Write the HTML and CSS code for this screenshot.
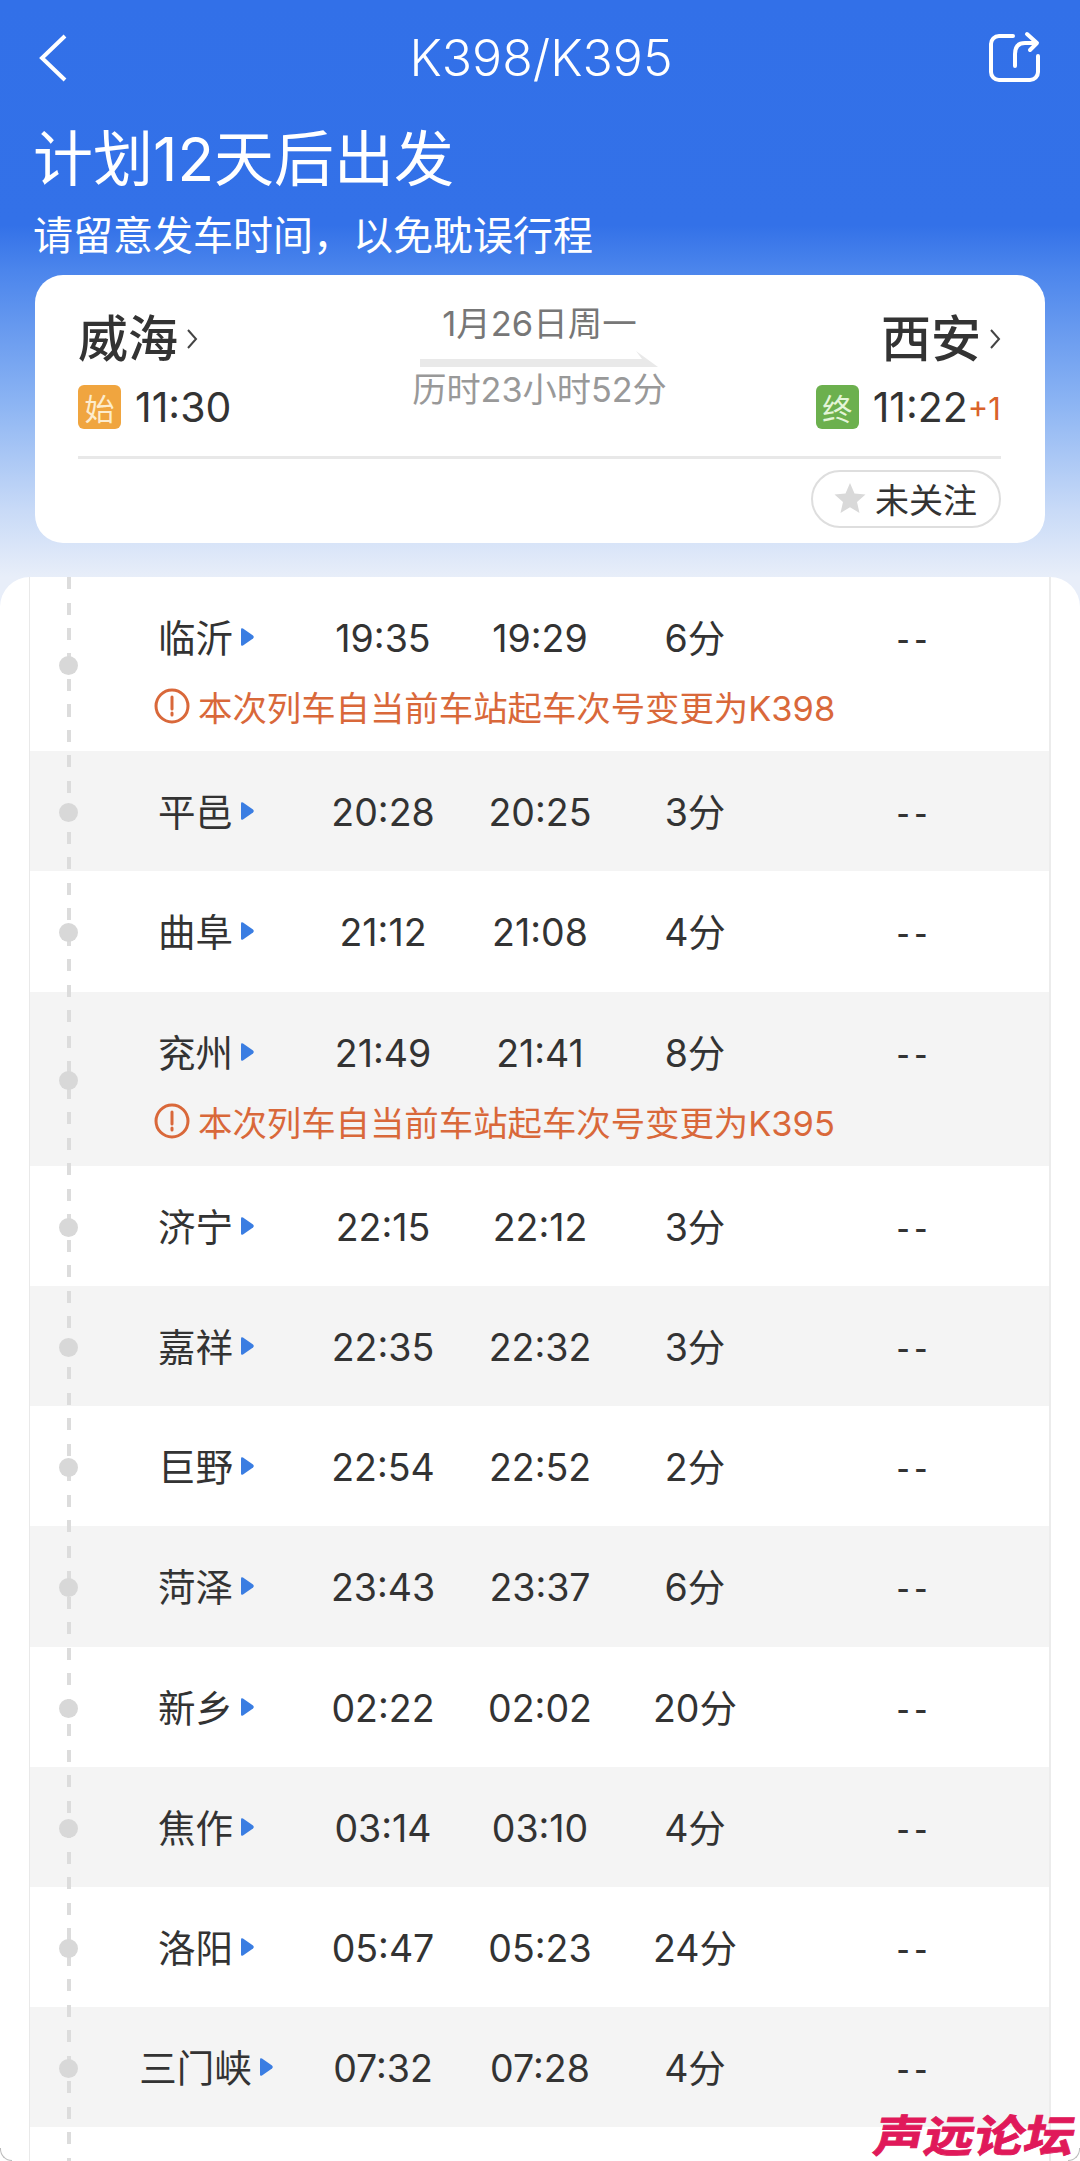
FILE: index.html
```html
<!DOCTYPE html>
<html lang="zh-CN">
<head>
    <meta charset="UTF-8">
    <meta name="viewport" content="width=device-width, initial-scale=1.0">
    <title>K398/K395</title>
    <link rel="stylesheet" href="styles.css">
</head>
<body>
<div class="page">

    <!-- Top bar -->
    <div class="navbar">
        <svg class="back-icon" viewBox="0 0 30 48"><path d="M27 2 L4 24 L27 46"/></svg>
        <div class="nav-title">K398/K395</div>
        <svg class="share-icon" viewBox="0 0 60 60">
            <path d="M29 8H15a8 8 0 0 0-8 8V44a8 8 0 0 0 8 8H46a8 8 0 0 0 8-8V28"/>
            <path d="M31 38V26Q31 15 41 15H52"/>
            <path d="M43 6L53 15L46 22"/>
        </svg>
    </div>

    <div class="headline">计划12天后出发</div>
    <div class="subline">请留意发车时间，以免耽误行程</div>

    <!-- Route card -->
    <div class="route-card">
        <div class="route-top">
            <div class="route-end">
                <div class="city">威海<svg class="chevron" viewBox="0 0 12 24"><path d="M2 3L10 12L2 21"/></svg></div>
                <div class="time-line">
                    <span class="tag tag-start">始</span>
                    <span class="end-time">11:30</span>
                </div>
            </div>
            <div class="route-mid">
                <div class="route-date">1月26日周一</div>
                <svg class="route-arrow" viewBox="0 0 238 16"><path d="M0 8H222L216 0L238 16H0Z"/></svg>
                <div class="route-length">历时23小时52分</div>
            </div>
            <div class="route-end route-end-right">
                <div class="city">西安<svg class="chevron" viewBox="0 0 12 24"><path d="M2 3L10 12L2 21"/></svg></div>
                <div class="time-line">
                    <span class="tag tag-end">终</span>
                    <span class="end-time">11:22</span><span class="plus-day">+1</span>
                </div>
            </div>
        </div>
        <div class="route-foot">
            <div class="follow-btn">
                <svg class="star" viewBox="0 0 32 32"><path d="M16 1L20.5 11.5L31.500 12.500L23 20L25.500 31L16 25.200L6.500 31L9 20L.5 12.500L11.500 11.500Z"/></svg>
                未关注
            </div>
        </div>
    </div>

    <!-- Stop list -->
    <div class="sheet">
        <div class="stops">
            <div class="track"></div>

            <div class="stop">
                <span class="dot"></span>
                <div class="stop-main">
                    <div class="stop-name">临沂<svg class="mark" viewBox="0 0 13 20"><path d="M2 1.500L12 8.500Q13.500 10 12 11.500L2 18.500Q0 19.500 0 17.500V2.500Q0 .5 2 1.500Z"/></svg></div>
                    <div>19:35</div><div>19:29</div><div>6分</div><div class="dash">--</div>
                </div>
                <div class="stop-note">
                    <svg class="warn" viewBox="0 0 36 36"><circle cx="18" cy="18" r="16"/><path d="M18 9V21M18 25V27"/></svg>
                    本次列车自当前车站起车次号变更为K398
                </div>
            </div>

            <div class="stop stop-alt">
                <span class="dot"></span>
                <div class="stop-main">
                    <div class="stop-name">平邑<svg class="mark" viewBox="0 0 13 20"><path d="M2 1.500L12 8.500Q13.500 10 12 11.500L2 18.500Q0 19.500 0 17.500V2.500Q0 .5 2 1.500Z"/></svg></div>
                    <div>20:28</div><div>20:25</div><div>3分</div><div class="dash">--</div>
                </div>
            </div>

            <div class="stop">
                <span class="dot"></span>
                <div class="stop-main">
                    <div class="stop-name">曲阜<svg class="mark" viewBox="0 0 13 20"><path d="M2 1.500L12 8.500Q13.500 10 12 11.500L2 18.500Q0 19.500 0 17.500V2.500Q0 .5 2 1.500Z"/></svg></div>
                    <div>21:12</div><div>21:08</div><div>4分</div><div class="dash">--</div>
                </div>
            </div>

            <div class="stop stop-alt">
                <span class="dot"></span>
                <div class="stop-main">
                    <div class="stop-name">兖州<svg class="mark" viewBox="0 0 13 20"><path d="M2 1.500L12 8.500Q13.500 10 12 11.500L2 18.500Q0 19.500 0 17.500V2.500Q0 .5 2 1.500Z"/></svg></div>
                    <div>21:49</div><div>21:41</div><div>8分</div><div class="dash">--</div>
                </div>
                <div class="stop-note">
                    <svg class="warn" viewBox="0 0 36 36"><circle cx="18" cy="18" r="16"/><path d="M18 9V21M18 25V27"/></svg>
                    本次列车自当前车站起车次号变更为K395
                </div>
            </div>

            <div class="stop">
                <span class="dot"></span>
                <div class="stop-main">
                    <div class="stop-name">济宁<svg class="mark" viewBox="0 0 13 20"><path d="M2 1.500L12 8.500Q13.500 10 12 11.500L2 18.500Q0 19.500 0 17.500V2.500Q0 .5 2 1.500Z"/></svg></div>
                    <div>22:15</div><div>22:12</div><div>3分</div><div class="dash">--</div>
                </div>
            </div>

            <div class="stop stop-alt">
                <span class="dot"></span>
                <div class="stop-main">
                    <div class="stop-name">嘉祥<svg class="mark" viewBox="0 0 13 20"><path d="M2 1.500L12 8.500Q13.500 10 12 11.500L2 18.500Q0 19.500 0 17.500V2.500Q0 .5 2 1.500Z"/></svg></div>
                    <div>22:35</div><div>22:32</div><div>3分</div><div class="dash">--</div>
                </div>
            </div>

            <div class="stop">
                <span class="dot"></span>
                <div class="stop-main">
                    <div class="stop-name">巨野<svg class="mark" viewBox="0 0 13 20"><path d="M2 1.500L12 8.500Q13.500 10 12 11.500L2 18.500Q0 19.500 0 17.500V2.500Q0 .5 2 1.500Z"/></svg></div>
                    <div>22:54</div><div>22:52</div><div>2分</div><div class="dash">--</div>
                </div>
            </div>

            <div class="stop stop-alt">
                <span class="dot"></span>
                <div class="stop-main">
                    <div class="stop-name">菏泽<svg class="mark" viewBox="0 0 13 20"><path d="M2 1.500L12 8.500Q13.500 10 12 11.500L2 18.500Q0 19.500 0 17.500V2.500Q0 .5 2 1.500Z"/></svg></div>
                    <div>23:43</div><div>23:37</div><div>6分</div><div class="dash">--</div>
                </div>
            </div>

            <div class="stop">
                <span class="dot"></span>
                <div class="stop-main">
                    <div class="stop-name">新乡<svg class="mark" viewBox="0 0 13 20"><path d="M2 1.500L12 8.500Q13.500 10 12 11.500L2 18.500Q0 19.500 0 17.500V2.500Q0 .5 2 1.500Z"/></svg></div>
                    <div>02:22</div><div>02:02</div><div>20分</div><div class="dash">--</div>
                </div>
            </div>

            <div class="stop stop-alt">
                <span class="dot"></span>
                <div class="stop-main">
                    <div class="stop-name">焦作<svg class="mark" viewBox="0 0 13 20"><path d="M2 1.500L12 8.500Q13.500 10 12 11.500L2 18.500Q0 19.500 0 17.500V2.500Q0 .5 2 1.500Z"/></svg></div>
                    <div>03:14</div><div>03:10</div><div>4分</div><div class="dash">--</div>
                </div>
            </div>

            <div class="stop">
                <span class="dot"></span>
                <div class="stop-main">
                    <div class="stop-name">洛阳<svg class="mark" viewBox="0 0 13 20"><path d="M2 1.500L12 8.500Q13.500 10 12 11.500L2 18.500Q0 19.500 0 17.500V2.500Q0 .5 2 1.500Z"/></svg></div>
                    <div>05:47</div><div>05:23</div><div>24分</div><div class="dash">--</div>
                </div>
            </div>

            <div class="stop stop-alt">
                <span class="dot"></span>
                <div class="stop-main">
                    <div class="stop-name">三门峡<svg class="mark" viewBox="0 0 13 20"><path d="M2 1.500L12 8.500Q13.500 10 12 11.500L2 18.500Q0 19.500 0 17.500V2.500Q0 .5 2 1.500Z"/></svg></div>
                    <div>07:32</div><div>07:28</div><div>4分</div><div class="dash">--</div>
                </div>
            </div>
        </div>
    </div>

    <!-- Forum watermark -->
    <div class="watermark">声远论坛</div>
    <span class="corner corner-left"></span>
    <span class="corner corner-right"></span>
</div>
</body>
</html>
```

FILE: styles.css
```css
/* General Styles */
* {
    margin: 0;
    padding: 0;
    box-sizing: border-box;
}
body {
    font-family: Inter, "Noto Sans CJK SC", sans-serif;
    color: #333;
}
.page {
    position: relative;
    width: 1080px;
    height: 2161px;
    overflow: hidden;
    background: linear-gradient(180deg, #3270e8 0, #3371e8 225px, #4b85ec 270px, #8ab3f3 400px, #c8daf7 510px, #e8eef9 577px);
}

/* Top bar */
.navbar {
    display: flex;
    align-items: center;
    justify-content: space-between;
    height: 116px;
    padding: 0 36px 0 38px;
}
.back-icon {
    width: 30px;
    height: 48px;
    margin-right: 30px;
    fill: none;
    stroke: #fff;
    stroke-width: 4;
}
.nav-title {
    color: #fff;
    font-size: 50px;
    font-weight: 300;
}
.share-icon {
    width: 60px;
    height: 60px;
    fill: none;
    stroke: #fff;
    stroke-width: 4;
    stroke-linecap: round;
    stroke-linejoin: round;
}
.headline {
    margin: 5px 0 0 33px;
    height: 76px;
    color: #fff;
    font-size: 60px;
    line-height: 76px;
}
.subline {
    margin: 15px 0 0 33px;
    height: 48px;
    color: #fff;
    font-size: 40px;
    line-height: 48px;
}

/* Route card */
.route-card {
    margin: 15px 35px 0;
    height: 268px;
    padding: 0 44px 0 43px;
    background: #fff;
    border-radius: 28px;
}
.route-top {
    display: flex;
    justify-content: space-between;
    height: 184px;
    border-bottom: 3px solid #e8e8e8;
}
.route-end {
    display: flex;
    flex-direction: column;
    width: 230px;
    padding-top: 33px;
}
.route-end-right {
    align-items: flex-end;
}
.city {
    display: flex;
    align-items: center;
    gap: 8px;
    height: 62px;
    font-size: 50px;
    font-weight: 500;
    line-height: 62px;
}
.chevron {
    width: 12px;
    height: 24px;
    fill: none;
    stroke: #444;
    stroke-width: 2;
}
.time-line {
    display: flex;
    align-items: center;
    margin-top: 15px;
    height: 44px;
    font-size: 41px;
}
.tag {
    display: flex;
    align-items: center;
    justify-content: center;
    width: 43px;
    height: 44px;
    margin-right: 14px;
    border-radius: 6px;
    color: #fdeccd;
    font-size: 30px;
}
.tag-start {
    background: #f0a53f;
}
.tag-end {
    background: #6cb04e;
    color: #e4f5d8;
}
.plus-day {
    margin-top: 3px;
    color: #d9622b;
    font-size: 31px;
}
.route-mid {
    display: flex;
    flex-direction: column;
    align-items: center;
    padding-top: 28px;
}
.route-date {
    height: 42px;
    color: #777;
    font-size: 34.500px;
    line-height: 42px;
}
.route-arrow {
    width: 238px;
    height: 16px;
    margin-top: 6px;
    fill: #e9e9e9;
}
.route-length {
    height: 42px;
    margin-top: 2px;
    color: #999;
    font-size: 34.200px;
    line-height: 42px;
}
.route-foot {
    display: flex;
    justify-content: flex-end;
    padding-top: 11px;
}
.follow-btn {
    display: flex;
    align-items: center;
    gap: 9px;
    width: 190px;
    height: 58px;
    padding: 0 0 2px 21px;
    border: 2px solid #dedede;
    border-radius: 29px;
    font-size: 34px;
}
.star {
    width: 32px;
    height: 32px;
    fill: #d9d9d9;
}

/* Stop list */
.sheet {
    margin-top: 34px;
    height: 1600px;
    padding: 0 29px;
    background: #fff;
    border-radius: 30px 30px 0 0;
}
.stops {
    position: relative;
    height: 100%;
    border-left: 1px solid #e9e9e9;
    border-right: 2px solid #ececec;
}
.track {
    position: absolute;
    z-index: 1;
    top: 0;
    bottom: 0;
    left: 37px;
    width: 4px;
    background: repeating-linear-gradient(180deg, #dcdcdc 0, #dcdcdc 12px, transparent 12px, transparent 25.500px);
}
.stop {
    position: relative;
}
.stop-alt {
    background: #f4f4f4;
}
.dot {
    position: absolute;
    z-index: 2;
    top: 50%;
    left: 29px;
    width: 19px;
    height: 19px;
    margin-top: -8px;
    border-radius: 50%;
    background: #d8d8d8;
}
.stop-main {
    display: grid;
    grid-template-columns: 186px 166px 148px 162px 272px;
    align-items: baseline;
    height: 120.200px;
    padding: 40px 0 0 84px;
    font-size: 37.500px;
    line-height: 44px;
    text-align: center;
}
.stop-name {
    display: flex;
    align-items: center;
    justify-content: center;
    gap: 8px;
    padding-right: 2px;
    font-size: 37.500px;
}
.mark {
    width: 13px;
    height: 20px;
    margin-top: -4px;
    fill: #3a7de2;
}
.dash {
    padding-left: 5px;
    font-family: "Liberation Sans", sans-serif;
    font-size: 38px;
    letter-spacing: 5px;
}
.stop-note {
    display: flex;
    align-items: center;
    gap: 8px;
    height: 54px;
    padding: 0 0 36px 124px;
    color: #d9683a;
    font-size: 34.400px;
}
.warn {
    width: 36px;
    height: 36px;
    fill: none;
    stroke: #d9683a;
    stroke-width: 3;
    stroke-linecap: round;
}

/* Forum watermark */
.watermark {
    position: absolute;
    z-index: 3;
    right: 5px;
    bottom: 3px;
    width: 200px;
    height: 44px;
    color: #e0195a;
    font-size: 50px;
    font-weight: 700;
    line-height: 44px;
    white-space: nowrap;
    transform: skewX(-12deg) scaleY(.88);
    -webkit-text-stroke: 1px #e0195a;
}
.corner {
    position: absolute;
    z-index: 3;
    bottom: 0;
    width: 12px;
    height: 13px;
    border-bottom: 1px solid #bbb;
}
.corner-left {
    left: 0;
    border-left: 1px solid #bbb;
    border-bottom-left-radius: 12px;
}
.corner-right {
    right: 0;
    border-right: 1px solid #bbb;
    border-bottom-right-radius: 12px;
}
```
